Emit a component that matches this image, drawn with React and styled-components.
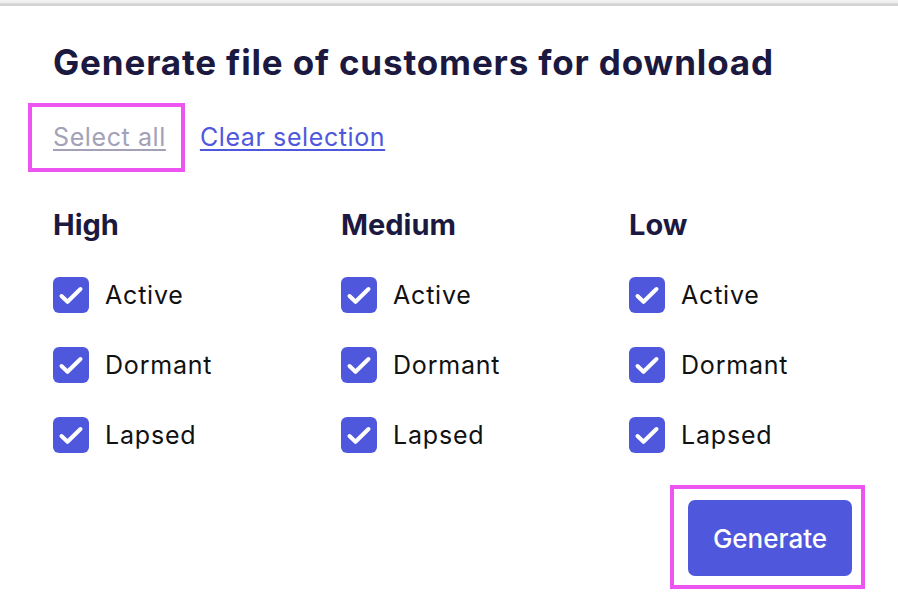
import React from "react";
import styled, { createGlobalStyle } from "styled-components";

const Global = createGlobalStyle`
  html, body { margin: 0; padding: 0; background: #fff; }
  body { font-family: Inter, "Noto Sans", sans-serif; }
`;

const TopEdge = styled.div`
  height: 6px;
  background: linear-gradient(#f3f3f3 0, #ececec 3px, #cfcfcf 4px, #d6d6d6 6px);
`;

const Panel = styled.div`
  padding: 34px 0 0 53px;
  width: 865px;
  box-sizing: border-box;
`;

const Title = styled.h1`
  margin: 0;
  font-size: 35px;
  line-height: 44px;
  font-weight: 700;
  color: #1c1941;
  letter-spacing: 0.85px;
`;

const Links = styled.div`
  display: flex;
  align-items: baseline;
  margin-top: 19px;
  gap: 15px;
`;

const Highlight = styled.div`
  margin-left: -25px;
  padding: 12px 15px 13px 21px;
  border: 4px solid #ec55f0;
`;

const LinkButton = styled.a`
  font-size: 25px;
  line-height: 36px;
  letter-spacing: 0.6px;
  text-decoration: underline;
  text-underline-offset: 3px;
  text-decoration-thickness: 2px;
  color: ${(p) => (p.$muted ? "#a3a1b8" : "#4f58dc")};
  cursor: pointer;
`;

const Columns = styled.div`
  display: grid;
  grid-template-columns: repeat(3, 288px);
  margin-top: 33px;
`;

const Column = styled.div`
  display: flex;
  flex-direction: column;
`;

const ColumnTitle = styled.h2`
  margin: 0 0 32px;
  font-size: 29px;
  line-height: 40px;
  font-weight: 700;
  color: #1c1941;
`;

const Options = styled.div`
  display: flex;
  flex-direction: column;
  gap: 34px;
`;

const Option = styled.label`
  display: flex;
  align-items: center;
  gap: 16px;
  font-size: 25px;
  line-height: 36px;
  letter-spacing: 0.8px;
  color: #111;
`;

const Box = styled.span`
  width: 36px;
  height: 36px;
  border-radius: 6px;
  background: #4f58dc;
  display: flex;
  flex: none;
`;

const Footer = styled.div`
  display: flex;
  justify-content: flex-end;
  margin-top: 32px;
`;

const ButtonFrame = styled.div`
  border: 4px solid #ec55f0;
  padding: 11px 9px 9px 14px;
`;

const Button = styled.button`
  width: 164px;
  height: 76px;
  border: none;
  border-radius: 7px;
  background: #4f58dc;
  color: #fff;
  font-family: inherit;
  font-size: 26px;
  font-weight: 500;
  cursor: pointer;
`;

const Check = () => (
  <svg width="36" height="36" viewBox="0 0 36 36" fill="none">
    <path d="M8.5 19l6 5.8L27.5 12" stroke="#fff" strokeWidth="4" strokeLinecap="round" strokeLinejoin="round" />
  </svg>
);

const groups = ["High", "Medium", "Low"];
const states = ["Active", "Dormant", "Lapsed"];

export default function App() {
  return (
    <>
      <Global />
      <TopEdge />
      <Panel>
        <Title>Generate file of customers for download</Title>
        <Links>
          <Highlight>
            <LinkButton $muted>Select all</LinkButton>
          </Highlight>
          <LinkButton>Clear selection</LinkButton>
        </Links>
        <Columns>
          {groups.map((g) => (
            <Column key={g}>
              <ColumnTitle>{g}</ColumnTitle>
              <Options>
                {states.map((s) => (
                  <Option key={s}>
                    <Box>
                      <Check />
                    </Box>
                    {s}
                  </Option>
                ))}
              </Options>
            </Column>
          ))}
        </Columns>
        <Footer>
          <ButtonFrame>
            <Button>Generate</Button>
          </ButtonFrame>
        </Footer>
      </Panel>
    </>
  );
}
